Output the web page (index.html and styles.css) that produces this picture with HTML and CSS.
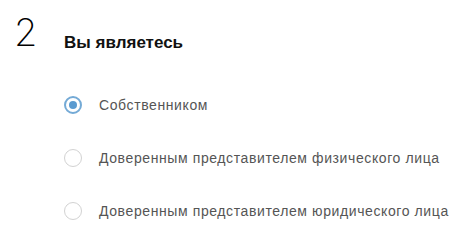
FILE: index.html
```html
<!DOCTYPE html>
<html lang="ru">
<head>
<meta charset="utf-8">
<link rel="stylesheet" href="styles.css">
</head>
<body>
<div class="step">
  <div class="step-num">2</div>
  <div class="step-body">
    <h2 class="title">Вы являетесь</h2>
    <div class="options">
      <label class="option">
        <span class="radio checked"></span>
        <span class="label">Собственником</span>
      </label>
      <label class="option">
        <span class="radio"></span>
        <span class="label">Доверенным представителем физического лица</span>
      </label>
      <label class="option">
        <span class="radio"></span>
        <span class="label">Доверенным представителем юридического лица</span>
      </label>
    </div>
  </div>
</div>
</body>
</html>
```
FILE: styles.css
```css
html, body {
  margin: 0;
  padding: 0;
  background: #ffffff;
}
body {
  font-family: "Liberation Sans", Arial, sans-serif;
  width: 466px;
  height: 236px;
  overflow: hidden;
}
.step {
  display: flex;
  padding: 12px 0 0 14px;
}
.step-num {
  width: 50px;
  font-family: "Inter", "Lato", sans-serif;
  font-weight: 200;
  font-size: 38px;
  line-height: 40px;
  color: #000;
}
.step-body {
  display: flex;
  flex-direction: column;
}
.title {
  margin: 21px 0 0 0;
  font-size: 17px;
  line-height: 20px;
  font-weight: bold;
  color: #111;
}
.options {
  display: flex;
  flex-direction: column;
  gap: 35px;
  margin-top: 43px;
}
.option {
  display: flex;
  align-items: center;
  height: 18px;
}
.radio {
  box-sizing: border-box;
  width: 18px;
  height: 18px;
  border-radius: 50%;
  border: 1px solid #d2d2d2;
  background: #fff;
  margin-right: 17px;
  flex: none;
  position: relative;
}
.radio.checked {
  border: 2px solid #74aad6;
}
.radio.checked::after {
  content: "";
  position: absolute;
  left: 3px;
  top: 3px;
  width: 8px;
  height: 8px;
  border-radius: 50%;
  background: #5b9bd0;
}
.label {
  font-size: 14px;
  letter-spacing: 0.6px;
  color: #555;
}
```
